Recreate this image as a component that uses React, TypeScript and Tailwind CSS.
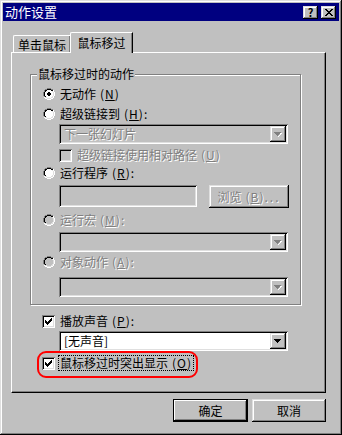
import React from 'react';

const raised =
  'shadow-[inset_-1px_-1px_#000,inset_1px_1px_#dfdfdf,inset_-2px_-2px_#808080,inset_2px_2px_#fff]';
const sunken =
  'shadow-[inset_1px_1px_#808080,inset_-1px_-1px_#fff,inset_2px_2px_#000,inset_-2px_-2px_#dfdfdf]';

const RADIO = [
  '....GGGG....',
  '..GGKKKKGG..',
  '.GKKFFFFKKW.',
  '.GKFFFFFFLW.',
  'GKFFFFFFFFLW',
  'GKFFFFFFFFLW',
  'GKFFFFFFFFLW',
  'GKFFFFFFFFLW',
  '.GKFFFFFFLW.',
  '.WLLFFFFLLW.',
  '..WWLLLLWW..',
  '....WWWW....',
];
const DOT = ['.KK.', 'KKKK', 'KKKK', '.KK.'];

function Radio({ checked = false, disabled = false }) {
  const colors: Record<string, string> = {
    G: '#808080',
    K: '#000000',
    W: '#ffffff',
    L: '#dfdfdf',
    F: disabled ? '#c0c0c0' : '#ffffff',
  };
  const px: React.ReactNode[] = [];
  RADIO.forEach((row, y) =>
    row.split('').forEach((c, x) => {
      if (c !== '.') px.push(<rect key={`${x}-${y}`} x={x} y={y} width={1} height={1} fill={colors[c]} />);
    })
  );
  if (checked)
    DOT.forEach((row, y) =>
      row.split('').forEach((c, x) => {
        if (c !== '.') px.push(<rect key={`d${x}-${y}`} x={x + 4} y={y + 4} width={1} height={1} fill="#000" />);
      })
    );
  return (
    <svg width="12" height="12" viewBox="0 0 12 12" shapeRendering="crispEdges" className="shrink-0">
      {px}
    </svg>
  );
}

function Check({ checked = false, disabled = false }) {
  return (
    <div
      className={`w-[13px] h-[13px] shrink-0 ${sunken} ${disabled ? 'bg-[#c0c0c0]' : 'bg-white'} flex items-center justify-center`}
    >
      {checked && (
        <svg width="7" height="7" viewBox="0 0 7 7" shapeRendering="crispEdges">
          <path d="M0 2h1v3h-1zM1 3h1v3h-1zM2 4h1v3h-1zM3 3h1v3h-1zM4 2h1v3h-1zM5 1h1v3h-1zM6 0h1v3h-1z" fill="#000" />
        </svg>
      )}
    </div>
  );
}

function Arrow({ disabled = false }) {
  return (
    <div className={`w-[16px] h-[16px] bg-[#c0c0c0] ${raised} flex items-center justify-center`}>
      <svg width="8" height="5" viewBox="0 0 8 5" shapeRendering="crispEdges">
        {disabled && <path d="M1 1h7v1h-1v1h-1v1h-1v1h-1v-1h1v-1h1v-1h1z" fill="#fff" />}
        <path d="M0 0h7v1h-1v1h-1v1h-1v1h-1v-1h-1v-1h-1v-1h-1z" fill={disabled ? '#808080' : '#000'} />
      </svg>
    </div>
  );
}

function Combo({ text = '', disabled = false, white = false }) {
  return (
    <div className={`w-[229px] h-[20px] ${sunken} ${white ? 'bg-white' : 'bg-[#c0c0c0]'} flex items-center p-[2px]`}>
      <span className={`flex-1 pl-[3px] ${disabled ? 'text-[#808080] [text-shadow:1px_1px_0_#fff]' : 'text-black'}`}>
        {text}
      </span>
      <Arrow disabled={disabled} />
    </div>
  );
}

const dis = 'text-[#808080] [text-shadow:1px_1px_0_#fff]';

function Key({ k }: { k: string }) {
  return (
    <span className="tracking-[1px] ml-[4px]">
      (<span className="underline underline-offset-1">{k}</span>)
    </span>
  );
}

export default function App() {
  return (
    <div className="w-[342px] h-[435px] bg-[#c0c0c0] p-[3px] flex flex-col text-[12px] leading-[14px] text-black shadow-[inset_-1px_-1px_#000,inset_1px_1px_#dfdfdf,inset_-2px_-2px_#808080,inset_2px_2px_#fff] [font-family:'Noto_Sans_CJK_SC','Liberation_Sans',sans-serif]">
      {/* title bar */}
      <div className="h-[18px] bg-[#000080] flex items-center pl-[2px] pr-[3px]">
        <span className="flex-1 text-white text-[13px]">动作设置</span>
        <div className="flex gap-[3px]">
          <div className={`w-[15px] h-[13px] ${raised} bg-[#c0c0c0] flex items-center justify-center text-[11px] font-bold leading-none`}>
            ?
          </div>
          <div className={`w-[15px] h-[13px] ${raised} bg-[#c0c0c0] flex items-center justify-center`}>
            <svg width="8" height="7" viewBox="0 0 8 7" shapeRendering="crispEdges">
              <path d="M0 0h2v1h1v1h2v-1h1v-1h2v1h-1v1h-1v1h-1v1h1v1h1v1h1v1h-2v-1h-1v-1h-2v1h-1v1h-2v-1h1v-1h1v-1h1v-1h-1v-1h-1v-1h-1z" fill="#000" />
            </svg>
          </div>
        </div>
      </div>

      <div className="pl-[8px] mt-[11px] flex flex-col">
        {/* tabs */}
        <div className="flex items-end h-[20px] pl-[2px] relative z-10">
          <div className="w-[58px] h-[17px] border-l border-t border-white rounded-tl-[2px] shadow-[inset_-1px_0_#808080] border-r border-r-black flex items-center justify-center pt-[1px]">
            单击鼠标
          </div>
          <div className="w-[63px] h-[21px] -mb-[1px] -ml-[1px] bg-[#c0c0c0] border-l border-t border-white rounded-tl-[2px] border-r border-r-black shadow-[inset_-1px_0_#808080] flex items-start justify-center pt-[3px]">
            鼠标移过
          </div>
        </div>

        {/* panel */}
        <div className="w-[315px] h-[341px] border-l border-t border-white border-r border-b border-r-black border-b-black shadow-[inset_-1px_-1px_#808080] flex flex-col">
          {/* group box */}
          <div className="ml-[18px] mt-[21px] w-[271px] h-[231px] border border-[#808080] shadow-[inset_1px_1px_#fff,1px_1px_#fff] relative flex flex-col pl-[12px]">
            <span className="absolute -top-[8px] left-[6px] bg-[#c0c0c0] px-[1px]">鼠标移过时的动作</span>
            <div className="mt-[11px] h-[16px] flex items-center gap-[5px]">
              <Radio checked />
              <span>
                无动作
                <Key k="N" />
              </span>
            </div>
            <div className="mt-[4px] h-[16px] flex items-center gap-[5px]">
              <Radio />
              <span>
                超级链接到
                <Key k="H" />:
              </span>
            </div>
            <div className="mt-[2px] ml-[16px]">
              <Combo text="下一张幻灯片" disabled />
            </div>
            <div className={`mt-[3px] ml-[16px] h-[16px] flex items-center gap-[5px] ${dis}`}>
              <Check disabled />
              <span>
                超级链接使用相对路径
                <Key k="U" />
              </span>
            </div>
            <div className="mt-[2px] h-[16px] flex items-center gap-[5px]">
              <Radio />
              <span>
                运行程序
                <Key k="R" />:
              </span>
            </div>
            <div className="mt-[4px] ml-[16px] flex gap-[12px]">
              <div className={`w-[138px] h-[22px] ${sunken} bg-[#c0c0c0]`} />
              <div className={`w-[80px] h-[23px] ${raised} bg-[#c0c0c0] flex items-center justify-center ${dis}`}>
                <span>
                  浏览
                  <Key k="B" />
                  <span className="tracking-[2px]">...</span>
                </span>
              </div>
            </div>
            <div className={`mt-[4px] h-[16px] flex items-center gap-[5px] ${dis}`}>
              <Radio disabled />
              <span>
                运行宏
                <Key k="M" />:
              </span>
            </div>
            <div className="mt-[4px] ml-[16px]">
              <Combo disabled />
            </div>
            <div className={`mt-[2px] h-[16px] flex items-center gap-[5px] ${dis}`}>
              <Radio disabled />
              <span>
                对象动作
                <Key k="A" />:
              </span>
            </div>
            <div className="mt-[7px] ml-[16px]">
              <Combo disabled />
            </div>
          </div>

          {/* sound */}
          <div className="mt-[8px] ml-[30px] h-[16px] flex items-center gap-[5px]">
            <Check checked />
            <span>
              播放声音
              <Key k="P" />:
            </span>
          </div>
          <div className="mt-[2px] ml-[47px]">
            <Combo text="[无声音]" white />
          </div>

          {/* highlight */}
          <div className="mt-[4px] ml-[30px] h-[16px] flex items-center gap-[4px] relative">
            <div className="absolute -left-[5px] -top-[4px] w-[161px] h-[27px] border-2 border-[#ff0000] rounded-[9px]" />
            <Check checked />
            <span className="outline-1 outline-dotted outline-black px-[1px]">
              鼠标移过时突出显示
              <Key k="O" />
            </span>
          </div>
        </div>

        {/* buttons */}
        <div className="mt-[6px] w-[315px] flex justify-end gap-[4px]">
          <div className="w-[75px] h-[23px] border border-black bg-[#c0c0c0] shadow-[inset_-1px_-1px_#000,inset_1px_1px_#fff,inset_-2px_-2px_#808080] flex items-center justify-center">
            确定
          </div>
          <div className={`w-[74px] h-[23px] ${raised} bg-[#c0c0c0] flex items-center justify-center`}>取消</div>
        </div>
      </div>
    </div>
  );
}
